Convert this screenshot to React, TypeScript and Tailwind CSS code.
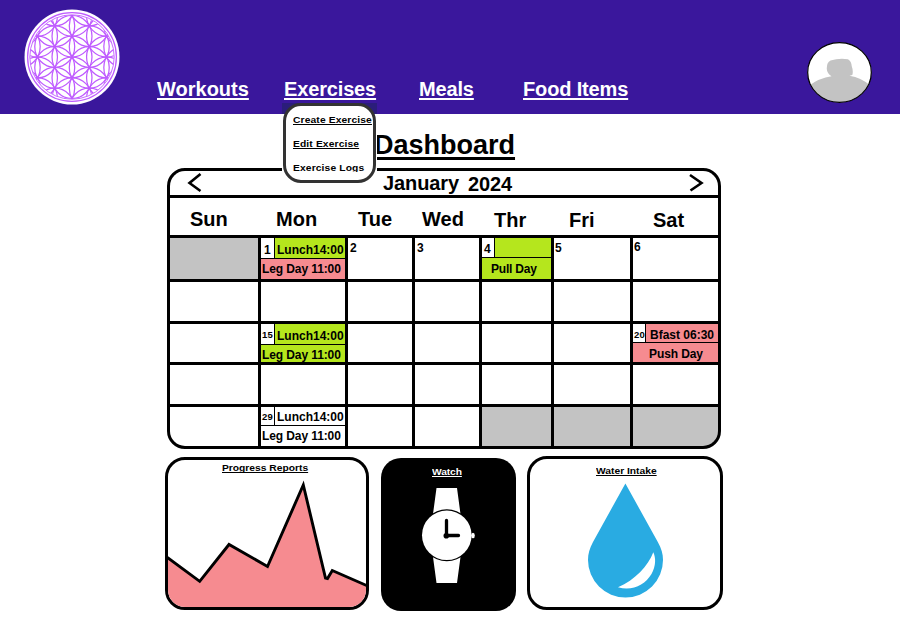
import type { ReactNode } from "react";

const R = 20.8;

function flowerCenters() {
  const points: { x: number; y: number }[] = [];
  for (let q = -3; q <= 3; q++) {
    for (let r = -3; r <= 3; r++) {
      if (Math.abs(q + r) > 3) continue;
      points.push({ x: q * R * 0.83, y: (r + q / 2) * R });
    }
  }
  return points;
}

function Logo() {
  return (
    <svg className="ml-[24px] mt-[9px] size-[96px] shrink-0" viewBox="-48 -48 96 96">
      <defs>
        <clipPath id="flower">
          <circle r="41.8" />
        </clipPath>
      </defs>
      <circle r="47.5" fill="#fff" />
      <g fill="none" stroke="#bf5cff" strokeWidth="1.25">
        <circle r="44.4" />
        <circle r="42.2" strokeWidth="0.9" />
        <g clipPath="url(#flower)">
          {flowerCenters().map((p, i) => (
            <ellipse key={i} cx={p.x} cy={p.y} rx={R * 0.96} ry={R} />
          ))}
        </g>
      </g>
    </svg>
  );
}

function Avatar() {
  return (
    <svg className="absolute left-[807px] top-[42px] h-[61px] w-[65px]" viewBox="0 0 65 61">
      <defs>
        <clipPath id="face">
          <ellipse cx="32.5" cy="30.5" rx="31.5" ry="29.5" />
        </clipPath>
      </defs>
      <ellipse cx="32.5" cy="30.5" rx="32" ry="30" fill="#fff" />
      <g clipPath="url(#face)" fill="#c3c3c3">
        <path d="M23.500 18.500 Q32 15.800 41 17.200 Q44.500 19.500 44.700 24 Q46.500 29 45.300 33 L42.500 33.800 Q54 35.500 64 44 V61 H0 V45 Q12 36 24.500 34.300 Q20 31.500 19.800 27 Q19.500 20.500 23.500 18.500Z" />
      </g>
      <ellipse cx="32.5" cy="30.5" rx="31.8" ry="29.8" fill="none" stroke="#000" strokeWidth="1.2" />
    </svg>
  );
}

const navLink =
  "block whitespace-nowrap text-[20px] leading-[20px] font-bold text-white underline decoration-2 underline-offset-2 [text-decoration-skip-ink:none]";
const smallText =
  "block origin-left scale-x-[1.08] whitespace-nowrap text-[9.5px] leading-[10px] font-bold";
const smallTitle = `${smallText} underline decoration-1 underline-offset-[1px] [text-decoration-skip-ink:none]`;

function ExerciseMenu() {
  return (
    <div className="absolute left-[-2px] top-[24px] h-[80px] w-[95px] bg-[linear-gradient(#2b1d7b_11px,#fff_11px)] px-[1px]">
      <div className="h-[80px] rounded-[18px] border-[3px] border-[#333] bg-white">
        <ul className="flex h-[66px] flex-col gap-[14px] overflow-hidden pl-[7px] pt-[9px]">
          <li><a className={`${smallTitle} tracking-[0.12px]`}>Create Exercise</a></li>
          <li><a className={`${smallTitle} tracking-[0.12px]`}>Edit Exercise</a></li>
          <li><a className={`${smallText} tracking-[0.12px]`}>Exercise Logs</a></li>
        </ul>
      </div>
    </div>
  );
}

function Header() {
  return (
    <header className="relative z-10 flex h-[114px] bg-[#3a179c]">
      <Logo />
      <nav className="ml-[37px] flex pt-[79px]">
        <a className={`${navLink} w-[127px]`}>Workouts</a>
        <div className="relative w-[135px]">
          <a className={`${navLink} tracking-[-0.15px]`}>Exercises</a>
          <ExerciseMenu />
        </div>
        <a className={`${navLink} w-[104px] tracking-[-0.15px]`}>Meals</a>
        <a className={`${navLink} tracking-[-0.15px]`}>Food Items</a>
      </nav>
      <Avatar />
    </header>
  );
}

const columns = "grid grid-cols-[88px_84px_64px_64px_69px_76px_85px] gap-x-[3px]";

const days = [
  { name: "Sun", pad: "pl-[20px] pt-[11px]" },
  { name: "Mon", pad: "pl-[18px] pt-[11px]" },
  { name: "Tue", pad: "pl-[13px] pt-[11px]" },
  { name: "Wed", pad: "pl-[10px] pt-[11px]" },
  { name: "Thr", pad: "pl-[15px] pt-[12px]" },
  { name: "Fri", pad: "pl-[18px] pt-[12px]" },
  { name: "Sat", pad: "pl-[23px] pt-[12px]" },
];

type EventDay = {
  date: string;
  dateClass: string;
  topClass: string;
  bottomClass: string;
  rows: string;
  top: string;
  bottom: string;
};

function EventCell({ date, dateClass, topClass, bottomClass, rows, top, bottom }: EventDay) {
  return (
    <div className={`grid gap-px overflow-hidden bg-black ${rows}`}>
      <div className="flex gap-px overflow-hidden">
        <span className={`shrink-0 overflow-hidden bg-white ${dateClass}`}>{date}</span>
        <span className={`flex-1 overflow-hidden whitespace-nowrap ${topClass}`}>{top}</span>
      </div>
      <div className={`overflow-hidden whitespace-nowrap ${bottomClass}`}>{bottom}</div>
    </div>
  );
}

function Day({ children, className = "" }: { children?: ReactNode; className?: string }) {
  return <div className={`bg-white ${className}`}>{children}</div>;
}

function OutsideDay() {
  return <div className="bg-[#c3c3c3]" />;
}

const smallDate = "w-[13px] pl-[1px] text-[9.5px] leading-[10px] tracking-[0.3px]";

function Calendar() {
  return (
    <section className="ml-[167px] flex h-[281px] w-[554px] flex-col gap-[3px] overflow-hidden rounded-[18px] border-[3px] border-black bg-black text-[12px] leading-[12px] font-bold">
      <div className="flex h-[24px] shrink-0 bg-white text-[20px] leading-[20px]">
        <svg className="ml-[17px] h-[24px] w-[18px] shrink-0" viewBox="187 171 18 24">
          <path d="M200.500 174 L189.500 183 L200.500 191" fill="none" stroke="#000" strokeWidth="2.6" />
        </svg>
        <span className="ml-[178px] w-[85px] shrink-0 pt-[2px] tracking-[-0.1px]">January</span>
        <span className="w-[50px] shrink-0 pt-[3px] tracking-[-0.1px]">2024</span>
        <svg className="ml-[169px] h-[24px] w-[18px] shrink-0" viewBox="687 171 18 24">
          <path d="M690 175 L701.500 183 L690.500 190.500" fill="none" stroke="#000" strokeWidth="2.6" />
        </svg>
      </div>
      <div className="grid h-[37px] shrink-0 grid-cols-[88px_87px_67px_67px_72px_79px_88px] bg-white text-[20px] leading-[20px]">
        {days.map((d) => (
          <span key={d.name} className={d.pad}>{d.name}</span>
        ))}
      </div>
      <div className={`${columns} h-[41px] shrink-0`}>
        <OutsideDay />
        <EventCell date="1" dateClass="w-[13px] pl-[3px] pt-[6px]" rows="grid-rows-[20px_20px]"
          top="Lunch14:00" topClass="bg-[#b5e61d] pl-[2px] pt-[6px]"
          bottom="Leg Day 11:00" bottomClass="bg-[#f68b90] pl-[1px] pt-[4px] tracking-[-0.1px]" />
        <Day className="pl-[2px] pt-[4px]">2</Day>
        <Day className="pl-[2px] pt-[4px]">3</Day>
        <EventCell date="4" dateClass="w-[12px] pl-[2px] pt-[5px]" rows="grid-rows-[19px_21px]"
          top="" topClass="bg-[#b5e61d]"
          bottom="Pull Day" bottomClass="bg-[#b5e61d] pl-[9px] pt-[5px] tracking-[-0.2px]" />
        <Day className="pl-[1px] pt-[4px]">5</Day>
        <Day className="pl-[1px] pt-[3px]">6</Day>
      </div>
      <div className={`${columns} h-[39px] shrink-0`}>
        {days.map((d) => <Day key={d.name} />)}
      </div>
      <div className={`${columns} h-[38px] shrink-0`}>
        <Day />
        <EventCell date="15" dateClass={`${smallDate} pt-[6px]`} rows="grid-rows-[20px_17px]"
          top="Lunch14:00" topClass="bg-[#b5e61d] pl-[2px] pt-[6px]"
          bottom="Leg Day 11:00" bottomClass="bg-[#b5e61d] pl-[1px] pt-[4px] tracking-[-0.1px]" />
        <Day /><Day /><Day /><Day />
        <EventCell date="20" dateClass="w-[12px] pl-[1px] pt-[6px] text-[9.5px] leading-[10px] tracking-[0.3px]" rows="grid-rows-[18px_19px]"
          top="Bfast 06:30" topClass="bg-[#f68b90] pl-[4px] pt-[5px]"
          bottom="Push Day" bottomClass="bg-[#f68b90] pl-[16px] pt-[5px] tracking-[-0.1px]" />
      </div>
      <div className={`${columns} h-[39px] shrink-0`}>
        {days.map((d) => <Day key={d.name} />)}
      </div>
      <div className={`${columns} h-[39px] shrink-0`}>
        <Day />
        <EventCell date="29" dateClass={`${smallDate} pt-[5px]`} rows="grid-rows-[18px_20px]"
          top="Lunch14:00" topClass="bg-white pl-[2px] pt-[4px]"
          bottom="Leg Day 11:00" bottomClass="bg-white pl-[1px] pt-[4px] tracking-[-0.1px]" />
        <Day /><Day />
        <OutsideDay /><OutsideDay /><OutsideDay />
      </div>
    </section>
  );
}

function ProgressCard() {
  return (
    <section className="mt-[1px] h-[153px] w-[204px] overflow-hidden rounded-[20px] border-[3px] border-black bg-white">
      <h2 className={`${smallTitle} ml-[54px] mt-[3px]`}>Progress Reports</h2>
      <svg className="h-[134px] w-[198px]" viewBox="168 473 198 134">
        <path
          d="M164 555.500 L168 558 L199.700 581.300 L229 544.500 L267.500 566.500 L303.300 485 L325.500 578 L327.500 578.500 L332.300 570.500 L370 587 V612 H164Z"
          fill="#f68b90" stroke="#000" strokeWidth="2.900"
        />
      </svg>
    </section>
  );
}

function WatchCard() {
  return (
    <section className="ml-[12px] mt-[2px] h-[153px] w-[135px] rounded-[20px] bg-black pt-[9px] text-white">
      <h2 className={`${smallTitle} ml-[51px] w-[60px] tracking-[-0.1px]`}>Watch</h2>
      <svg className="h-[110px] w-[135px]" viewBox="381 477 135 110">
        <path d="M436.500 488 H457 L460.500 514 H433Z M433 557 H460.500 L457 583 H436.500Z" fill="#fff" />
        <circle cx="446.800" cy="535.300" r="26" fill="#000" />
        <circle cx="446.800" cy="535.300" r="24.800" fill="#fff" />
        <ellipse cx="473" cy="535.500" rx="1.800" ry="2.800" fill="#fff" />
        <path d="M446.500 520.500 V535.500 H458.500" fill="none" stroke="#000" strokeWidth="3.300" strokeLinecap="round" />
        <circle cx="446.300" cy="535.800" r="2.800" fill="#000" />
      </svg>
    </section>
  );
}

function WaterCard() {
  return (
    <section className="ml-[11px] h-[154px] w-[196px] rounded-[20px] border-[3px] border-black bg-white pt-[7px]">
      <h2 className={`${smallTitle} ml-[66px]`}>Water Intake</h2>
      <svg className="h-[125px] w-[190px]" viewBox="530 476 190 125">
        <path d="M625.400 483.500 L657.800 542 C661.500 548.500 663 554 663 560 A37.500 37.500 0 0 1 588 560 C588 554 589.500 548.500 593 542Z" fill="#29abe2" />
        <path d="M653.300 552.300 C648 566 635 580 618 587.300 C632 591.500 645 585 651.500 574 C656 566 656 558 653.300 552.300Z" fill="#fff" />
      </svg>
    </section>
  );
}

export default function App() {
  return (
    <div className="h-[626px] w-[900px] overflow-hidden bg-white font-['Liberation_Sans',Arial,sans-serif] text-black">
      <Header />
      <main>
        <h1 className="ml-[374px] h-[54px] pt-[18px] text-[27px] leading-[27px] font-bold">
          <span className="underline decoration-3 underline-offset-[3px]">Dashboard</span>
        </h1>
        <Calendar />
        <div className="ml-[165px] mt-[7px] flex">
          <ProgressCard />
          <WatchCard />
          <WaterCard />
        </div>
      </main>
    </div>
  );
}
